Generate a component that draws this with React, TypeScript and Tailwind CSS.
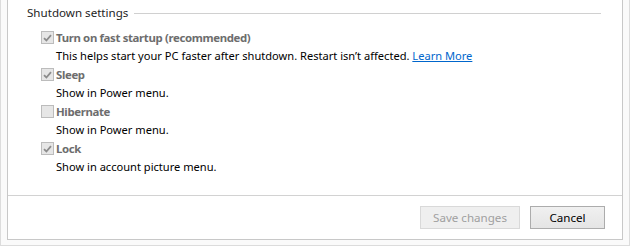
import React from "react";

type Item = {
  label: string;
  desc: React.ReactNode;
  checked: boolean;
};

const items: Item[] = [
  {
    label: "Turn on fast startup (recommended)",
    desc: (
      <>
        This helps start your PC faster after shutdown. Restart isn’t affected.{" "}
        <a href="#" className="text-[#0066cc] underline">
          Learn More
        </a>
      </>
    ),
    checked: true,
  },
  { label: "Sleep", desc: "Show in Power menu.", checked: true },
  { label: "Hibernate", desc: "Show in Power menu.", checked: false },
  { label: "Lock", desc: "Show in account picture menu.", checked: true },
];

function Checkbox({ checked }: { checked: boolean }) {
  return (
    <span className="flex h-[13px] w-[13px] shrink-0 items-center justify-center border border-[#bcbcbc] bg-[#e6e6e6]">
      {checked && (
        <svg width="9" height="8" viewBox="0 0 9 8">
          <path d="M1 4.2 L3.4 6.5 L8 1.2" fill="none" stroke="#8c8c8c" strokeWidth="1.8" />
        </svg>
      )}
    </span>
  );
}

export default function App() {
  return (
    <div className="h-[247px] w-[630px] bg-white font-['Noto_Sans','Open_Sans',sans-serif] text-[11.1px]">
      <div className="flex h-[246px] w-[630px] flex-col border-x border-b border-[#dcdcdc] bg-[#fafafa] px-[6px] pb-[5px]">
        <div className="flex flex-1 flex-col border-x border-b border-[#c8c8c8] bg-white">
          {/* Settings */}
          <div className="h-[196px] border-b border-[#d2d2d2] pl-[19px] pr-[21px] pt-[4px]">
            <div className="flex h-[18px] items-center gap-[6px]">
              <span className="text-[11.6px] leading-[18px] text-[#1e1e1e]">Shutdown settings</span>
              <div className="h-px flex-1 bg-[#d0d0d0]" />
            </div>
            <div className="ml-[14px] mt-[6px] flex flex-col">
              {items.map((item) => (
                <div key={item.label} className="flex flex-col">
                  <div className="flex h-[19px] items-center gap-[2px]">
                    <Checkbox checked={item.checked} />
                    <span className="text-[11.4px] font-bold leading-[19px] tracking-[-0.35px] text-[#6d6d6d]">
                      {item.label}
                    </span>
                  </div>
                  <div className="h-[18px] pl-[15px] leading-[18px] text-black">{item.desc}</div>
                </div>
              ))}
            </div>
          </div>

          {/* Buttons */}
          <div className="flex justify-end gap-[10px] pr-[17px] pt-[10px]">
            <button
              disabled
              className="h-[23px] w-[100px] border border-[#d9d9d9] bg-[#efefef] text-[11.6px] text-[#a0a0a0]"
            >
              Save changes
            </button>
            <button className="h-[23px] w-[75px] border border-[#acacac] bg-gradient-to-b from-[#f0f0f0] to-[#e5e5e5] text-[11.6px] text-black">
              Cancel
            </button>
          </div>
        </div>
      </div>
    </div>
  );
}
